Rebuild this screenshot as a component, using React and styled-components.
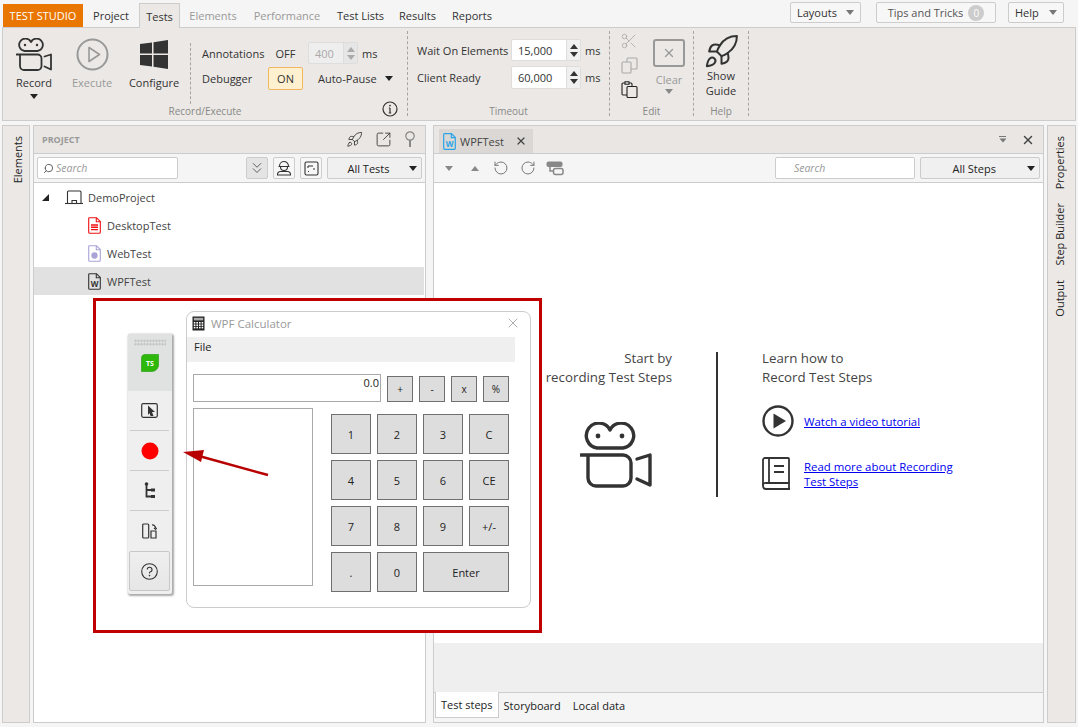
import styled, { createGlobalStyle } from 'styled-components'
import { Rocket, Scissors, SquareArrowOutUpRight, ChevronsDown, RotateCcw, RotateCw, Search, X } from 'lucide-react'

const Global = createGlobalStyle`
    html, body { margin: 0; padding: 0; background: #f5f5f5; }
    * { box-sizing: border-box; }
    body { font-family: "Open Sans", "Noto Sans", sans-serif; font-size: 11px; color: #333; }
`

const Page = styled.div`
    position: relative;
    width: 1078px;
    height: 727px;
    overflow: hidden;
    display: flex;
    flex-direction: column;
`

const TopBar = styled.div`
    height: 27px;
    padding-left: 3px;
    display: flex;
    align-items: flex-end;
`

const Brand = styled.div`
    width: 80px;
    height: 23px;
    background: #e87600;
    color: #fff;
    display: flex;
    align-items: center;
    justify-content: center;
    font-size: 11px;
`

const Tab = styled.div`
    width: ${p => p.$w}px;
    height: 24px;
    display: flex;
    align-items: center;
    justify-content: center;
    color: ${p => (p.$off ? '#999' : '#333')};
    ${p => p.$active && `
        height: 25px;
        margin-bottom: -1px;
        position: relative;
        background: #ebe8e5;
        border: 1px solid #ccc;
        border-bottom: none;
    `}
`

const Spacer = styled.div`
    flex: 1;
`

const TopButtons = styled.div`
    display: flex;
    align-self: flex-start;
    margin-top: 2px;
`

const TopButton = styled.div`
    width: ${p => p.$w}px;
    margin-right: ${p => p.$mr}px;
    height: 21px;
    padding: 0 6px;
    background: #f7f7f7;
    border: 1px solid #ccc;
    border-radius: 2px;
    display: flex;
    align-items: center;
    justify-content: ${p => (p.$center ? 'center' : 'space-between')};
    gap: 5px;
    color: ${p => (p.$center ? '#555' : '#333')};
`

const Count = styled.span`
    width: 16px;
    height: 16px;
    border-radius: 50%;
    background: #ccc;
    color: #fff;
    font-size: 10px;
    display: flex;
    align-items: center;
    justify-content: center;
`

const Caret = styled.span`
    display: inline-block;
    width: 0;
    height: 0;
    flex: none;
    border-left: ${p => p.$s || 4}px solid transparent;
    border-right: ${p => p.$s || 4}px solid transparent;
    border-top: ${p => (p.$s || 4) + 1}px solid ${p => p.$c || '#222'};
`

const UpCaret = styled(Caret)`
    border-top: none;
    border-bottom: ${p => (p.$s || 4) + 1}px solid ${p => p.$c || '#222'};
`

const Ribbon = styled.div`
    height: 94px;
    margin: 0 2px;
    background: #ebe8e5;
    border: 1px solid #ccc;
    display: flex;
`

const Group = styled.div`
    width: ${p => p.$w}px;
    display: flex;
    flex-direction: column;
`

const GroupBody = styled.div`
    height: 73px;
    display: flex;
    padding: ${p => p.$pad || '0'};
`

const GroupLabel = styled.div`
    flex: 1;
    display: grid;
    grid-template-columns: 1fr auto 1fr;
    align-items: center;
    font-size: 10px;
    color: #888;
    padding-top: 1px;
    > span { grid-column: 2; }
    > svg { justify-self: end; margin: -5px 9px 0 0; }
`

const Sep = styled.div`
    width: 0;
    flex: none;
    margin: ${p => p.$m || '3px 0 4px'};
    border-left: 1px dashed #a5a5a5;
`

const LargeTool = styled.div`
    width: ${p => p.$w}px;
    display: flex;
    flex-direction: column;
    align-items: center;
    padding-top: 10px;
    color: ${p => (p.$off ? '#999' : '#333')};
    span { margin-top: 5px; line-height: 15px; }
    i { margin-top: 4px; }
`

const IconSlot = styled.div`
    height: 32px;
    display: flex;
    align-items: center;
    justify-content: center;
`

const Fields = styled.div`
    padding: ${p => p.$pad};
    display: flex;
    flex-direction: column;
    gap: ${p => p.$gap}px;
`

const FieldRow = styled.div`
    height: ${p => p.$h || 22}px;
    display: flex;
    align-items: center;
`

const FieldLabel = styled.div`
    width: ${p => p.$w}px;
`

const Toggle = styled.div`
    width: 35px;
    height: ${p => (p.$on ? 23 : 22)}px;
    display: flex;
    align-items: center;
    justify-content: center;
    ${p => p.$on && `
        background: #fff1cf;
        border: 1px solid #f2b661;
        border-radius: 2px;
    `}
`

const Spinner = styled.div`
    width: ${p => p.$w}px;
    height: ${p => p.$h || 22}px;
    margin-left: ${p => p.$ml || 0}px;
    margin-right: 4px;
    background: ${p => (p.$off ? '#eee' : '#fff')};
    color: ${p => (p.$off ? '#aaa' : '#333')};
    border: 1px solid #ddd;
    border-radius: 2px;
    display: flex;
    align-items: center;
    padding-left: 6px;
`

const SpinValue = styled.div`
    flex: 1;
`

const SpinArrows = styled.div`
    width: 14px;
    height: 100%;
    background: ${p => (p.$off ? '#e6e6e6' : '#f0f0f0')};
    border-left: 1px solid #ddd;
    display: flex;
    flex-direction: column;
    align-items: center;
    justify-content: center;
    gap: 3px;
`

const AutoPause = styled.div`
    margin-left: 15px;
    width: 75px;
    display: flex;
    align-items: center;
    justify-content: space-between;
`

const EditIcons = styled.div`
    width: 38px;
    padding-top: 4px;
    display: flex;
    flex-direction: column;
    align-items: center;
    gap: 7px;
`

const ClearTool = styled.div`
    width: 42px;
    padding-top: 11px;
    color: #999;
    display: flex;
    flex-direction: column;
    align-items: center;
    span { margin-top: 5px; line-height: 15px; }
    i { margin-top: 2px; }
`

const ClearBox = styled.div`
    width: 32px;
    height: 28px;
    flex: none;
    border: 2px solid #999;
    border-radius: 3px;
    display: flex;
    align-items: center;
    justify-content: center;
`

const HelpTool = styled.div`
    width: 100%;
    padding-top: 5px;
    display: flex;
    flex-direction: column;
    align-items: center;
    line-height: 15px;
    svg { margin-bottom: -2px; }
`

const Main = styled.div`
    height: 598px;
    margin: 4px 0 0 2px;
    display: flex;
`

const Rail = styled.div`
    width: ${p => p.$w}px;
    margin-left: ${p => p.$ml || 0}px;
    background: #ebe8e5;
    border: 1px solid #ccc;
    display: flex;
    flex-direction: column;
    align-items: center;
    padding: ${p => p.$pad};
    gap: 14px;
`

const RailItem = styled.div`
    writing-mode: vertical-rl;
    transform: rotate(180deg);
    color: #222;
    line-height: 14px;
`

const Panel = styled.div`
    width: ${p => p.$w}px;
    margin-left: ${p => p.$ml}px;
    border: 1px solid #ccc;
    background: #fff;
    display: flex;
    flex-direction: column;
`

const PanelHeader = styled.div`
    height: 28px;
    flex: none;
    background: #e9e6e3;
    border-bottom: 1px solid #ccc;
    display: flex;
    align-items: ${p => (p.$tabs ? 'flex-end' : 'center')};
`

const PanelTitle = styled.div`
    margin-left: 8px;
    font-size: 9px;
    font-weight: 700;
    color: #9a9a9a;
    flex: 1;
`

const HeaderIcons = styled.div`
    display: flex;
    align-items: center;
    gap: ${p => p.$gap || 12}px;
    margin-right: ${p => p.$mr || 10}px;
    align-self: center;
`

const PanelTools = styled.div`
    height: 29px;
    flex: none;
    background: #f5f5f5;
    border-bottom: 1px solid #ccc;
    display: flex;
    align-items: center;
    padding: 0 3px;
`

const SearchBox = styled.div`
    width: 141px;
    height: 22px;
    margin-left: ${p => p.$ml || 0}px;
    background: #fff;
    border: 1px solid #ccc;
    border-radius: 2px;
    display: flex;
    align-items: center;
    gap: 2px;
    padding-left: ${p => p.$pl || 5}px;
    color: #999;
    font-style: italic;
    font-size: 10.5px;
`

const ToolButton = styled.div`
    width: 22px;
    height: 22px;
    margin-left: ${p => p.$ml || 0}px;
    background: ${p => (p.$active ? '#e4e4e4' : '#f7f7f7')};
    border: 1px solid #ccc;
    border-radius: 2px;
    display: flex;
    align-items: center;
    justify-content: center;
`

const SelectBox = styled.div`
    width: ${p => p.$w}px;
    height: 22px;
    margin-left: ${p => p.$ml}px;
    padding: 0 4px 0 0;
    background: #f0f0f0;
    border: 1px solid #ccc;
    border-radius: 2px;
    color: #222;
    display: flex;
    align-items: center;
`

const SelectText = styled.div`
    flex: 1;
    text-align: center;
`

const TreeRow = styled.div`
    height: 28px;
    display: flex;
    align-items: center;
    padding-left: ${p => p.$indent}px;
    margin-right: 1px;
    gap: ${p => p.$gap || 6}px;
    background: ${p => (p.$selected ? '#e1e1e1' : 'transparent')};
    color: #444;
`

const TreeToggle = styled.div`
    width: 0;
    height: 0;
    margin-right: 12px;
    border-left: 7px solid transparent;
    border-bottom: 7px solid #222;
`

const DocTab = styled.div`
    width: 94px;
    height: 24px;
    margin-left: 5px;
    padding: 0 6px 0 4px;
    background: #dad7d4;
    color: #444;
    display: flex;
    align-items: center;
    gap: 4px;
    span { flex: 1; }
`

const DocContent = styled.div`
    flex: 1;
    background: #fff;
    padding: 166px 0 0 111px;
    display: flex;
    align-items: flex-start;
`

const StartColumn = styled.div`
    width: 127px;
    display: flex;
    flex-direction: column;
    align-items: flex-end;
    font-size: 13.3px;
    line-height: 19px;
    color: #444;
    white-space: nowrap;
    svg { margin: 35px 20px 0 0; }
`

const Divider = styled.div`
    width: 2px;
    height: 145px;
    margin: 3px 44px 0;
    background: #333;
`

const LearnColumn = styled.div`
    font-size: 13.3px;
    line-height: 19px;
    color: #444;
`

const LearnLink = styled.div`
    display: flex;
    align-items: center;
    gap: ${p => p.$gap}px;
    margin-top: ${p => p.$mt}px;
`

const Link = styled.a`
    font-size: 11.4px;
    line-height: 15px;
    color: #0000ee;
    text-decoration: underline;
`

const GreyBand = styled.div`
    height: 50px;
    flex: none;
    background: #efefef;
    border-bottom: 1px solid #ccc;
`

const BottomTabs = styled.div`
    height: 29px;
    flex: none;
    background: #f5f5f5;
    display: flex;
    align-items: flex-start;
    padding-left: 1px;
    color: #222;
`

const BottomTab = styled.div`
    height: 25px;
    display: flex;
    align-items: center;
    margin-top: ${p => (p.$active ? -1 : 0)}px;
    padding: ${p => p.$pad};
    ${p => p.$active && `
        height: 26px;
        background: #fff;
        border: 1px solid #ccc;
        border-top: none;
    `}
`

const Overlay = styled.div`
    position: absolute;
    left: 93px;
    top: 298px;
    width: 449px;
    height: 335px;
    background: #fff;
    border: 3px solid #c00000;
    display: flex;
    align-items: flex-start;
    padding: 10px 0 0 32px;
`

const FloatBar = styled.div`
    width: 44px;
    height: 260px;
    margin-top: 23px;
    background: #efefef;
    border-radius: 2px;
    box-shadow: 1px 1px 2px 1px #aaa;
    display: flex;
    flex-direction: column;
`

const FloatHead = styled.div`
    height: 57px;
    flex: none;
    background: #e0e1e1;
    display: flex;
    flex-direction: column;
    align-items: center;
    padding: 5px 1px 0 0;
    gap: 8px;
`

const Grip = styled.div`
    width: 32px;
    height: 7px;
    background-image: radial-gradient(#c4c4c4 1px, transparent 1.2px);
    background-size: 3px 3.5px;
`

const FloatItem = styled.div`
    height: 40px;
    flex: none;
    margin: 0 3px 0 2px;
    display: flex;
    align-items: center;
    justify-content: center;
    border-bottom: ${p => (p.$last ? 'none' : '1px solid #ccc')};
`

const FloatHelp = styled.div`
    height: 40px;
    margin: 0 2px 0 1px;
    background: linear-gradient(#efefef, #e6e6e6);
    border: 1px solid #c8c8c8;
    border-radius: 2px;
    display: flex;
    align-items: center;
    justify-content: center;
`

const Calc = styled.div`
    width: 345px;
    height: 297px;
    margin-left: 14px;
    padding: 0 0 0 1px;
    border: 1px solid #ccc;
    border-radius: 8px;
    background: #fff;
    display: flex;
    flex-direction: column;
    flex: none;
`

const CalcTitle = styled.div`
    height: 25px;
    flex: none;
    display: flex;
    align-items: center;
    padding: 0 9px 3px 4px;
    color: #999;
    font-size: 11.5px;
    gap: 6px;
    span { flex: 1; }
`

const CalcMenu = styled.div`
    height: 25px;
    width: 328px;
    flex: none;
    margin-left: -1px;
    padding: 0 0 6px 7px;
    background: #efefef;
    color: #222;
    display: flex;
    align-items: center;
`

const CalcBody = styled.div`
    padding: 12px 0 0 5px;
    display: grid;
    grid-template-columns: 188px 1fr;
    column-gap: 6px;
`

const CalcDisplay = styled.div`
    height: 28px;
    border: 1px solid #aaa;
    text-align: right;
    color: #222;
    padding: 0 1px;
    line-height: 16px;
    font-size: 11px;
`

const OpKeys = styled.div`
    margin-top: 2px;
    display: grid;
    grid-template-columns: repeat(4, 26px);
    column-gap: 6px;
`

const KeyButton = styled.div`
    height: ${p => (p.$op ? 26 : 40)}px;
    ${p => p.$wide && 'grid-column: span 2;'}
    background: #ddd;
    border: 1px solid #707070;
    color: #222;
    font-size: ${p => (p.$op ? 10 : 11)}px;
    display: flex;
    align-items: center;
    justify-content: center;
`

const CalcList = styled.div`
    width: 120px;
    height: 178px;
    margin-top: 6px;
    border: 1px solid #aaa;
`

const NumKeys = styled.div`
    margin: 12px 0 0 -56px;
    display: grid;
    grid-template-columns: repeat(4, 40px);
    grid-auto-rows: 40px;
    gap: 6px;
    justify-self: start;
`

const ArrowLayer = styled.svg`
    position: absolute;
    left: 175px;
    top: 445px;
    width: 100px;
    height: 36px;
`

const Reel = ({ size = 36, w = 3, color = '#333' }) => (
    <svg width={size} height={size * 66 / 72} viewBox="0 0 72 66" fill="none" stroke={color} strokeWidth={w} strokeLinecap="round" strokeLinejoin="round">
        <path d="M17 26 H43 A12.5 12.5 0 1 0 30 8 A12.5 12.5 0 1 0 17 26 Z" />
        <circle cx="18" cy="14" r="2.4" fill={color} stroke="none" />
        <circle cx="42" cy="14" r="2.4" fill={color} stroke="none" />
        <path d="M1 33 H43 A8 8 0 0 1 51 41 V56 A8 8 0 0 1 43 64 H16 A8 8 0 0 1 8 56 V33" />
        <path d="M57 37 L70 33 V63 L57 57" />
    </svg>
)

const PlayRing = () => (
    <svg width="33" height="33" viewBox="0 0 33 33" fill="none" stroke="#999" strokeWidth="2">
        <circle cx="16.5" cy="16.5" r="15" />
        <path d="M13 9.5 L23.5 16.5 L13 23.5 Z" strokeLinejoin="round" strokeWidth="1.6" />
    </svg>
)

const WindowsLogo = () => (
    <svg width="28" height="29" viewBox="0 0 28 29" fill="#333">
        <path d="M0 4 L12 2.4 V13.6 H0 Z" />
        <path d="M13.5 2.2 L28 0 V13.6 H13.5 Z" />
        <path d="M0 15 H12 V26.5 L0 25 Z" />
        <path d="M13.5 15 H28 V29 L13.5 26.8 Z" />
    </svg>
)

const InfoIcon = () => (
    <svg width="16" height="16" viewBox="0 0 16 16" fill="none" stroke="#333" strokeWidth="1.2">
        <circle cx="8" cy="8" r="7" />
        <path d="M8 7 V12 M6.8 12 H9.2 M6.8 7 H8" />
        <circle cx="8" cy="4.6" r="0.9" fill="#333" stroke="none" />
    </svg>
)

const CopyIcon = () => (
    <svg width="17" height="17" viewBox="0 0 17 17" fill="none" stroke="#aaa" strokeWidth="1.1">
        <rect x="1" y="5" width="9" height="11" rx="1" />
        <path d="M6 5 V2 A1 1 0 0 1 7 1 H15 A1 1 0 0 1 16 2 V11 A1 1 0 0 1 15 12 H10" />
    </svg>
)

const PasteIcon = () => (
    <svg width="17" height="17" viewBox="0 0 17 17" fill="none" stroke="#222" strokeWidth="1.1">
        <path d="M6 14 H2 A1 1 0 0 1 1 13 V3 A1 1 0 0 1 2 2 H10 A1 1 0 0 1 11 3 V5" />
        <rect x="4" y="0.8" width="4" height="2.4" fill="#fff" />
        <rect x="6" y="5.5" width="10" height="11" rx="1" />
    </svg>
)

const PinIcon = () => (
    <svg width="12" height="17" viewBox="0 0 12 17" fill="none" stroke="#888" strokeWidth="1.2">
        <circle cx="6" cy="5" r="4.2" />
        <path d="M6 9 V16" strokeWidth="2" />
    </svg>
)

const WorkerIcon = () => (
    <svg width="16" height="16" viewBox="0 0 16 16" fill="none" stroke="#333" strokeWidth="1.1">
        <path d="M3.5 6 A4.5 4.5 0 0 1 12.5 6 M2.5 6.5 H13.5" />
        <path d="M4.5 7 A3.5 3.5 0 0 0 11.5 7" />
        <path d="M1.5 15 V14 A3 3 0 0 1 4.5 11.5 H11.5 A3 3 0 0 1 14.5 14 V15 Z" />
    </svg>
)

const StepsIcon = () => (
    <svg width="15" height="15" viewBox="0 0 15 15" fill="none" stroke="#333" strokeWidth="1.1">
        <rect x="1" y="1" width="13" height="13" rx="1.5" />
        <path d="M4 5 H9 M4 5 V7 M9 8 H11 M4 10.5 H5" />
    </svg>
)

const ProjectIcon = () => (
    <svg width="18" height="15" viewBox="0 0 18 15" fill="none" stroke="#333" strokeWidth="1.1">
        <path d="M2.5 13 V2 A1 1 0 0 1 3.5 1 H15 A1 1 0 0 1 16 2 V13" />
        <path d="M0 13.5 H18" />
        <path d="M7 13 V10.5 H11.5 V13" />
    </svg>
)

const DocIcon = ({ color, children, w = 1.1 }) => (
    <svg width="13" height="17" viewBox="0 0 13 17" fill="none" stroke={color} strokeWidth={w}>
        <path d="M1.5 0.7 H8.5 L12.3 4.5 V15.3 A1 1 0 0 1 11.3 16.3 H1.7 A1 1 0 0 1 0.7 15.3 V1.5 A.8 .8 0 0 1 1.5 .7 Z" />
        <path d="M8.3 .7 V4.7 H12.3" />
        {children}
    </svg>
)

const Wmark = ({ color }) => (
    <text x="6.5" y="14" textAnchor="middle" fontSize="8" fontFamily="Open Sans" fontWeight="700" fill={color} stroke="none">W</text>
)

const StoryIcon = () => (
    <svg width="18" height="15" viewBox="0 0 18 15" fill="none">
        <rect x="0.5" y="0.5" width="16" height="5.5" rx="2" fill="#888" />
        <path d="M4 6 V10 H7" stroke="#888" strokeWidth="1.5" />
        <rect x="7.5" y="7.5" width="9.5" height="6" rx="2" stroke="#888" strokeWidth="1.5" />
    </svg>
)

const FilterIcon = () => (
    <svg width="8" height="7" viewBox="0 0 8 7">
        <path d="M0 0.5 H7" stroke="#777" />
        <path d="M0.5 2.5 H7.5 L4 6.5 Z" fill="#777" />
    </svg>
)

const PlayFilled = () => (
    <svg width="32" height="32" viewBox="0 0 32 32" fill="none">
        <circle cx="16" cy="16" r="14.5" stroke="#333" strokeWidth="2.4" />
        <path d="M11.5 8.5 L24 16 L11.5 23.5 Z" fill="#333" />
    </svg>
)

const BookIcon = () => (
    <svg width="29" height="33" viewBox="0 0 29 33" fill="none" stroke="#333" strokeWidth="1.8" strokeLinejoin="round">
        <path d="M27 26 V2 A1 1 0 0 0 26 1 H3 A2 2 0 0 0 1 3 V29 A3 3 0 0 0 4 32 H28" />
        <path d="M1 28 A2.5 2.5 0 0 1 4 26 H27 V32" />
        <path d="M7 1 V26" />
        <path d="M12 9 H22 M12 15 H22" />
    </svg>
)

const CalcIcon = () => (
    <svg width="13" height="15" viewBox="0 0 13 15">
        <rect x="0.5" y="0.5" width="12" height="14" fill="#222" />
        <rect x="1.8" y="1.8" width="9.4" height="2.6" fill="#aaa" />
        {[6, 8.4, 10.8].map(y => [1.8, 4.4, 7, 9.6].map(x => (
            <rect key={`${x}-${y}`} x={x} y={y} width="1.6" height="1.6" fill="#fff" />
        )))}
    </svg>
)

const TsLogo = () => (
    <svg width="18" height="18" viewBox="0 0 18 18">
        <path d="M4 0.5 H17.5 V11 A6.5 6.5 0 0 1 11 17.5 H0.5 V4 A3.5 3.5 0 0 1 4 0.5 Z" fill="#2fb80c" stroke="#249a08" strokeWidth="0.6" />
        <text x="9" y="12" textAnchor="middle" fontSize="7" fontWeight="700" fontFamily="Open Sans" fill="#fff">TS</text>
    </svg>
)

const PickIcon = () => (
    <svg width="17" height="15" viewBox="0 0 17 15" fill="none">
        <rect x="0.7" y="0.7" width="15.6" height="13.6" rx="1.5" stroke="#333" strokeWidth="1.2" />
        <path d="M7 2.5 L14 9 H11 L12.5 13 H9.5 L8.5 10 L7 12 Z" fill="#333" />
    </svg>
)

const TreeIcon = () => (
    <svg width="11" height="17" viewBox="0 0 11 17" fill="none" stroke="#333" strokeWidth="1.8">
        <path d="M2.5 2 V14.5 H8 M2.5 8 H8" />
        <circle cx="2.5" cy="2" r="1.8" fill="#333" stroke="none" />
        <rect x="7" y="6.5" width="4" height="3" fill="#333" stroke="none" />
        <rect x="7" y="13" width="4" height="3" fill="#333" stroke="none" />
    </svg>
)

const DockIcon = () => (
    <svg width="15" height="16" viewBox="0 0 15 16" fill="none" stroke="#333" strokeWidth="1.2">
        <rect x="0.7" y="1" width="6" height="14" rx="1" />
        <path d="M9 8 H14 V15 H9 Z" />
        <path d="M10 2 A3 3 0 0 1 13.5 5 M12 5 L13.5 6.3 L14.8 5" />
    </svg>
)

const HelpIcon = () => (
    <svg width="17" height="17" viewBox="0 0 17 17" fill="none" stroke="#333" strokeWidth="1.1">
        <circle cx="8.5" cy="8.5" r="7.8" />
        <path d="M6.2 6.6 A2.4 2.4 0 1 1 9 9 Q8.5 9.3 8.5 10.5" />
        <circle cx="8.5" cy="12.6" r="0.8" fill="#333" stroke="none" />
    </svg>
)

const SpinControl = ({ value, w, h, off, ml }) => (
    <Spinner $w={w} $h={h} $off={off} $ml={ml}>
        <SpinValue>{value}</SpinValue>
        <SpinArrows $off={off}>
            <UpCaret $s={4} $c={off ? '#aaa' : '#333'} />
            <Caret $s={4} $c={off ? '#aaa' : '#333'} />
        </SpinArrows>
    </Spinner>
)

const NUM_KEYS = ['1', '2', '3', 'C', '4', '5', '6', 'CE', '7', '8', '9', '+/-', '.', '0']

export default function App() {
    return (
        <Page>
            <Global />
            <TopBar>
                <Brand>TEST STUDIO</Brand>
                <Tab $w={56}>Project</Tab>
                <Tab $w={41} $active>Tests</Tab>
                <Tab $w={66} $off>Elements</Tab>
                <Tab $w={82} $off>Performance</Tab>
                <Tab $w={65}>Test Lists</Tab>
                <Tab $w={49}>Results</Tab>
                <Tab $w={60}>Reports</Tab>
                <Spacer />
                <TopButtons>
                    <TopButton $w={71} $mr={15}>Layouts <Caret $s={4} $c="#777" /></TopButton>
                    <TopButton $w={120} $mr={12} $center>Tips and Tricks <Count>0</Count></TopButton>
                    <TopButton $w={56} $mr={14}>Help <Caret $s={4} $c="#777" /></TopButton>
                </TopButtons>
            </TopBar>

            <Ribbon>
                <Group $w={404}>
                    <GroupBody>
                        <LargeTool $w={62}>
                            <IconSlot><Reel size={36} w={3.6} /></IconSlot>
                            <span>Record</span>
                            <Caret as="i" $s={4} />
                        </LargeTool>
                        <LargeTool $w={54} $off>
                            <IconSlot><PlayRing /></IconSlot>
                            <span>Execute</span>
                        </LargeTool>
                        <LargeTool $w={70}>
                            <IconSlot><WindowsLogo /></IconSlot>
                            <span>Configure</span>
                        </LargeTool>
                        <Sep $m="15px 0 -3px 1px" />
                        <Fields $pad="14px 0 0 11px" $gap={3}>
                            <FieldRow>
                                <FieldLabel $w={66}>Annotations</FieldLabel>
                                <Toggle>OFF</Toggle>
                                <SpinControl value="400" w={50} off ml={5} />
                                ms
                            </FieldRow>
                            <FieldRow $h={23}>
                                <FieldLabel $w={66}>Debugger</FieldLabel>
                                <Toggle $on>ON</Toggle>
                                <AutoPause>Auto-Pause <Caret $s={4} /></AutoPause>
                            </FieldRow>
                        </Fields>
                    </GroupBody>
                    <GroupLabel><span>Record/Execute</span><InfoIcon /></GroupLabel>
                </Group>
                <Sep />
                <Group $w={201}>
                    <GroupBody>
                        <Fields $pad="11px 0 0 9px" $gap={5}>
                            <FieldRow>
                                <FieldLabel $w={94}>Wait On Elements</FieldLabel>
                                <SpinControl value="15,000" w={70} />
                                ms
                            </FieldRow>
                            <FieldRow $h={23}>
                                <FieldLabel $w={94}>Client Ready</FieldLabel>
                                <SpinControl value="60,000" w={70} h={23} />
                                ms
                            </FieldRow>
                        </Fields>
                    </GroupBody>
                    <GroupLabel><span>Timeout</span></GroupLabel>
                </Group>
                <Sep />
                <Group $w={83}>
                    <GroupBody>
                        <EditIcons>
                            <Scissors size={18} color="#aaa" strokeWidth={1.1} />
                            <CopyIcon />
                            <PasteIcon />
                        </EditIcons>
                        <ClearTool>
                            <ClearBox><X size={14} color="#999" strokeWidth={2.2} /></ClearBox>
                            <span>Clear</span>
                            <Caret as="i" $s={4} $c="#888" />
                        </ClearTool>
                    </GroupBody>
                    <GroupLabel><span>Edit</span></GroupLabel>
                </Group>
                <Sep />
                <Group $w={54}>
                    <GroupBody>
                        <HelpTool>
                            <Rocket size={37} strokeWidth={1.3} color="#333" />
                            <div>Show</div>
                            <div>Guide</div>
                        </HelpTool>
                    </GroupBody>
                    <GroupLabel><span>Help</span></GroupLabel>
                </Group>
                <Sep />
            </Ribbon>

            <Main>
                <Rail $w={28} $pad="10px 0 0 3px">
                    <RailItem>Elements</RailItem>
                </Rail>
                <Panel $w={393} $ml={3}>
                    <PanelHeader>
                        <PanelTitle>PROJECT</PanelTitle>
                        <HeaderIcons $gap={12} $mr={9}>
                            <Rocket size={17} strokeWidth={1.2} color="#333" />
                            <SquareArrowOutUpRight size={17} strokeWidth={1.2} color="#333" />
                            <PinIcon />
                        </HeaderIcons>
                    </PanelHeader>
                    <PanelTools>
                        <SearchBox>
                            <Search size={11} color="#555" style={{ transform: 'scaleX(-1)' }} />
                            Search
                        </SearchBox>
                        <ToolButton $ml={68} $active><ChevronsDown size={18} strokeWidth={1} color="#333" /></ToolButton>
                        <ToolButton $ml={5}><WorkerIcon /></ToolButton>
                        <ToolButton $ml={5}><StepsIcon /></ToolButton>
                        <SelectBox $w={95} $ml={5}><SelectText>All Tests</SelectText><Caret $s={4} /></SelectBox>
                    </PanelTools>
                    <TreeRow $indent={8} $gap={4}>
                        <TreeToggle />
                        <ProjectIcon />
                        <span style={{ marginLeft: 1 }}>DemoProject</span>
                    </TreeRow>
                    <TreeRow $indent={54}>
                        <DocIcon color="#f01010">
                            <path d="M3 8 H10 M3 10.3 H10 M3 12.6 H10" strokeWidth="1.4" />
                        </DocIcon>
                        DesktopTest
                    </TreeRow>
                    <TreeRow $indent={54}>
                        <DocIcon color="#a9a3d6">
                            <circle cx="6.5" cy="10.5" r="2.6" fill="#a9a3d6" />
                        </DocIcon>
                        WebTest
                    </TreeRow>
                    <TreeRow $indent={54} $selected>
                        <DocIcon color="#333"><Wmark color="#333" /></DocIcon>
                        WPFTest
                    </TreeRow>
                </Panel>
                <Panel $w={611} $ml={7}>
                    <PanelHeader $tabs>
                        <DocTab>
                            <DocIcon color="#2aa4e8" w={1.2}><Wmark color="#2aa4e8" /></DocIcon>
                            <span>WPFTest</span>
                            <X size={12} strokeWidth={2.4} color="#444" />
                        </DocTab>
                        <Spacer />
                        <HeaderIcons $gap={14} $mr={8}>
                            <FilterIcon />
                            <X size={14} strokeWidth={2.4} color="#444" />
                        </HeaderIcons>
                    </PanelHeader>
                    <PanelTools>
                        <Caret $s={4} $c="#888" style={{ marginLeft: 8 }} />
                        <UpCaret $s={4} $c="#888" style={{ marginLeft: 18 }} />
                        <RotateCcw size={16} color="#777" strokeWidth={1.5} style={{ marginLeft: 14 }} />
                        <RotateCw size={16} color="#777" strokeWidth={1.5} style={{ marginLeft: 11 }} />
                        <span style={{ marginLeft: 10, display: 'flex' }}><StoryIcon /></span>
                        <SearchBox $ml={211} $pl={18}>Search</SearchBox>
                        <SelectBox $w={120} $ml={5}><SelectText>All Steps</SelectText><Caret $s={4} /></SelectBox>
                    </PanelTools>
                    <DocContent>
                        <StartColumn>
                            <div>Start by</div>
                            <div>recording Test Steps</div>
                            <Reel size={72} w={3.4} />
                        </StartColumn>
                        <Divider />
                        <LearnColumn>
                            <div>Learn how to</div>
                            <div>Record Test Steps</div>
                            <LearnLink $gap={10} $mt={18}>
                                <PlayFilled />
                                <Link href="#watch">Watch a video tutorial</Link>
                            </LearnLink>
                            <LearnLink $gap={13} $mt={20}>
                                <BookIcon />
                                <Link href="#read">Read more about Recording<br />Test Steps</Link>
                            </LearnLink>
                        </LearnColumn>
                    </DocContent>
                    <GreyBand />
                    <BottomTabs>
                        <BottomTab $active $pad="0 5px">Test steps</BottomTab>
                        <BottomTab $pad="0 12px 0 5px">Storyboard</BottomTab>
                        <BottomTab $pad="0">Local data</BottomTab>
                    </BottomTabs>
                </Panel>
                <Rail $w={29} $ml={3} $pad="10px 3px 0 0">
                    <RailItem>Properties</RailItem>
                    <RailItem>Step Builder</RailItem>
                    <RailItem>Output</RailItem>
                </Rail>
            </Main>

            <Overlay>
                <FloatBar>
                    <FloatHead>
                        <Grip />
                        <TsLogo />
                    </FloatHead>
                    <FloatItem><PickIcon /></FloatItem>
                    <FloatItem>
                        <svg width="18" height="18" viewBox="0 0 18 18"><circle cx="9" cy="9" r="8.5" fill="#ff0000" /></svg>
                    </FloatItem>
                    <FloatItem><TreeIcon /></FloatItem>
                    <FloatItem $last><DockIcon /></FloatItem>
                    <FloatHelp><HelpIcon /></FloatHelp>
                </FloatBar>
                <Calc>
                    <CalcTitle>
                        <CalcIcon />
                        <span>WPF Calculator</span>
                        <X size={16} strokeWidth={0.9} color="#777" />
                    </CalcTitle>
                    <CalcMenu>File</CalcMenu>
                    <CalcBody>
                        <CalcDisplay>0.0</CalcDisplay>
                        <OpKeys>
                            {['+', '-', 'x', '%'].map(k => <KeyButton key={k} $op>{k}</KeyButton>)}
                        </OpKeys>
                        <CalcList />
                        <NumKeys>
                            {NUM_KEYS.map(k => <KeyButton key={k}>{k}</KeyButton>)}
                            <KeyButton $wide>Enter</KeyButton>
                        </NumKeys>
                    </CalcBody>
                </Calc>
            </Overlay>
            <ArrowLayer viewBox="0 0 100 36">
                <path d="M93 30 L24 11" stroke="#b80000" strokeWidth="2.4" />
                <path d="M8 7 L29 5 L26 17 Z" fill="#b80000" />
            </ArrowLayer>
        </Page>
    )
}
